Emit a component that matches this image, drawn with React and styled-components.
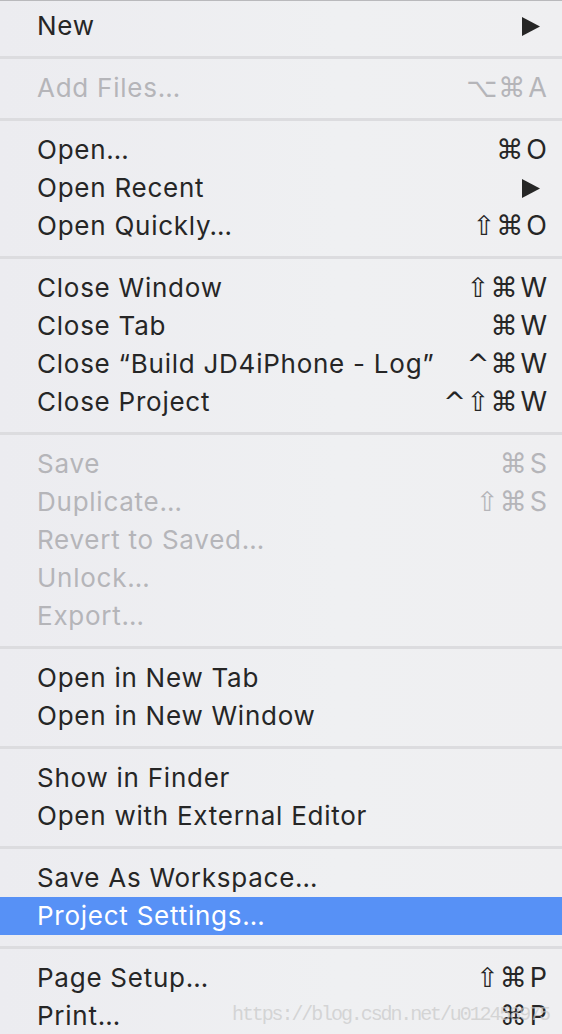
import React from "react";
import styled, { createGlobalStyle } from "styled-components";

const Global = createGlobalStyle`
  html, body { margin: 0; padding: 0; background: #eeeef1; }
  body { font-family: Inter, "Noto Sans", "DejaVu Sans", sans-serif; }
`;

const Menu = styled.div`
  position: relative;
  width: 562px;
  height: 1034px;
  overflow: hidden;
  box-sizing: border-box;
  border-top: 1px solid #b9b9bc;
  padding-top: 6px;
  background: linear-gradient(90deg, #ececf0 0%, #eff0f2 60%, #efeff1 100%);
  display: flex;
  flex-direction: column;
`;

const Row = styled.div`
  box-sizing: border-box;
  height: 38px;
  flex: 0 0 38px;
  display: flex;
  align-items: center;
  justify-content: space-between;
  padding: 0 15px 2px 37px;
  font-size: 26px;
  letter-spacing: 0.75px;
  color: ${(p) => (p.$active ? "#ffffff" : p.$disabled ? "#b5b5b9" : "#262626")};
  background: ${(p) => (p.$active ? "#5791f6" : "transparent")};
  white-space: nowrap;
`;

const Label = styled.span``;

const Shortcut = styled.span`
  display: flex;
  align-items: center;
  gap: 2px;
`;

const Mods = styled.span`
  font-family: "DejaVu Sans", sans-serif;
  font-size: 27px;
  letter-spacing: 1px;
`;

const Key = styled.span`
  font-family: Inter, sans-serif;
  font-size: 27px;
  letter-spacing: 0;
`;

const Separator = styled.div`
  flex: 0 0 3px;
  height: 3px;
  margin: 11px 0 10px;
  background: #dcdcdf;
`;

const Arrow = styled.svg`
  width: 18px;
  height: 19px;
  margin: 2px 7px 0 0;
`;

const Watermark = styled.div`
  position: absolute;
  left: 232px;
  top: 1002px;
  font-family: "Liberation Mono", "DejaVu Sans Mono", monospace;
  font-size: 20px;
  letter-spacing: -2.1px;
  color: rgba(200, 200, 200, 0.7);
  pointer-events: none;
`;

const SubArrow = () => (
  <Arrow viewBox="0 0 18 19">
    <path d="M0 0 L18 9.5 L0 19 Z" fill="#262626" />
  </Arrow>
);

const groups = [
  [{ label: "New", sub: true }],
  [{ label: "Add Files…", mods: "⌥⌘", key: "A", disabled: true }],
  [
    { label: "Open…", mods: "⌘", key: "O" },
    { label: "Open Recent", sub: true },
    { label: "Open Quickly…", mods: "⇧⌘", key: "O" },
  ],
  [
    { label: "Close Window", mods: "⇧⌘", key: "W" },
    { label: "Close Tab", mods: "⌘", key: "W" },
    { label: "Close “Build JD4iPhone - Log”", mods: "^⌘", key: "W" },
    { label: "Close Project", mods: "^⇧⌘", key: "W" },
  ],
  [
    { label: "Save", mods: "⌘", key: "S", disabled: true },
    { label: "Duplicate…", mods: "⇧⌘", key: "S", disabled: true },
    { label: "Revert to Saved…", disabled: true },
    { label: "Unlock…", disabled: true },
    { label: "Export…", disabled: true },
  ],
  [{ label: "Open in New Tab" }, { label: "Open in New Window" }],
  [{ label: "Show in Finder" }, { label: "Open with External Editor" }],
  [{ label: "Save As Workspace…" }, { label: "Project Settings…", active: true }],
  [
    { label: "Page Setup…", mods: "⇧⌘", key: "P" },
    { label: "Print…", mods: "⌘", key: "P" },
  ],
];

export default function App() {
  return (
    <>
      <Global />
      <Menu>
        {groups.map((g, gi) => (
          <React.Fragment key={gi}>
            {gi > 0 && <Separator />}
            {g.map((it) => (
              <Row key={it.label} $disabled={it.disabled} $active={it.active}>
                <Label>{it.label}</Label>
                {it.sub ? (
                  <SubArrow />
                ) : it.key ? (
                  <Shortcut>
                    <Mods>{it.mods}</Mods>
                    <Key>{it.key}</Key>
                  </Shortcut>
                ) : null}
              </Row>
            ))}
          </React.Fragment>
        ))}
        <Watermark>https://blog.csdn.net/u012458975</Watermark>
      </Menu>
    </>
  );
}
